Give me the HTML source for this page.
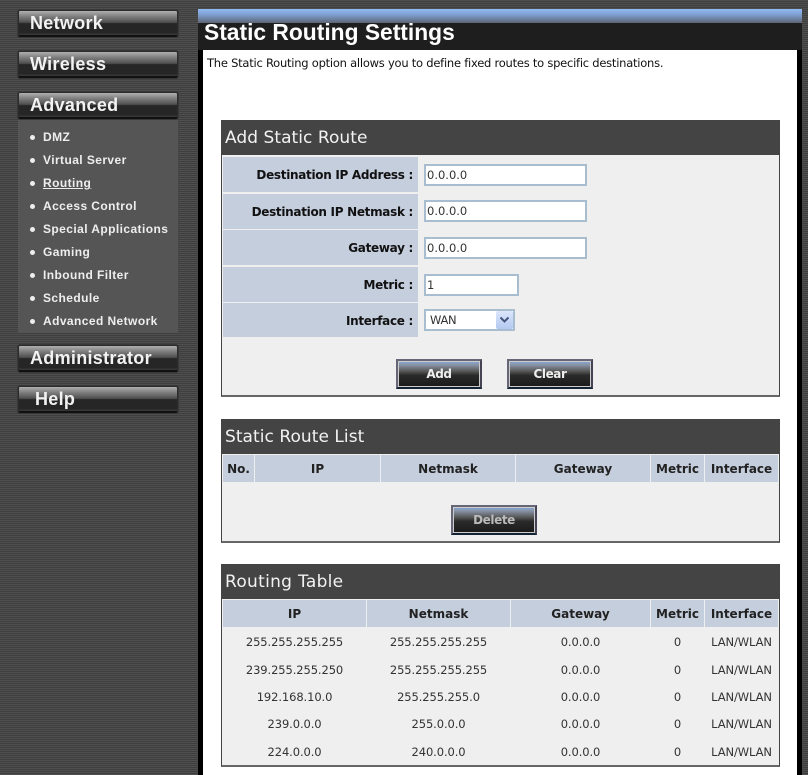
<!DOCTYPE html>
<html><head><meta charset="utf-8"><style>
html,body{margin:0;padding:0;background:#4a4a4a}
#p{position:relative;width:808px;height:775px;overflow:hidden;font-family:"DejaVu Sans","Liberation Sans",sans-serif;
background:repeating-linear-gradient(180deg,#4e4e4e 0,#4e4e4e 1px,#3f3f3f 1px,#3f3f3f 2px)}
#p div,#p span{position:absolute;white-space:nowrap;box-sizing:border-box}
.nb{left:18px;width:160px;height:27px;border:1px solid #2c2c2c;border-radius:2px;border-bottom:2px solid #111;
background:linear-gradient(180deg,#b0b0b0 0,#808080 22%,#4e4e4e 48%,#262626 52%,#262626 90%,#3a3a3a 100%);box-shadow:0 0 0 1px #383838;
color:#f2f2f2;font:bold 18px/25px "Liberation Sans",sans-serif;letter-spacing:.3px;padding:0 0 0 11px}
.sub{color:#eee;font:bold 12px/14px "Liberation Sans",sans-serif;left:43px;letter-spacing:.42px}
.dot{left:30px;width:5px;height:5px;border-radius:50%;background:#eee}
.box{left:221px;width:559px;background:#efefef;border:1px solid #444;border-top:0;border-bottom:2px solid #666}
.hd{left:221px;width:559px;height:35px;background:#444;color:#f2f2f2;font:17px/37px "DejaVu Sans",sans-serif;padding-left:4px;letter-spacing:.05px}
.lab{left:223px;width:195px;background:#c5cedd;text-align:right;padding-right:5px;font:bold 12px/36px "DejaVu Sans",sans-serif;color:#111;letter-spacing:-.3px}
.inp{background:#fff;border:2px solid #a9bdd0;font:11.5px/18px "DejaVu Sans",sans-serif;color:#333;padding-left:1px;letter-spacing:0}
.btn{width:86px;height:30px;border:2px solid;border-color:#667 #445 #123 #667;outline:1px solid #ccc;outline-offset:-3px;
background:linear-gradient(180deg,#7fa8e0 0,#8a96a8 14%,#555 40%,#2a2a2a 55%,#1a1a1a 100%);color:#eee;text-align:center;font:bold 12px/26px "DejaVu Sans",sans-serif;letter-spacing:-.4px}
.th{top:0;background:#c5cedd;text-align:center;font:bold 12px/29px "DejaVu Sans",sans-serif;color:#222;letter-spacing:0}
.td{text-align:center;font:11.5px/16px "DejaVu Sans",sans-serif;color:#333;letter-spacing:-.1px}
</style></head><body><div id="p">

<div style="left:18px;top:119px;width:160px;height:214px;background:#555"></div>
<div class="nb" style="top:10px">Network</div>
<div class="nb" style="top:51px">Wireless</div>
<div class="nb" style="top:92px">Advanced</div>
<div class="dot" style="top:135px"></div><div class="sub" style="top:130px">DMZ</div>
<div class="dot" style="top:158px"></div><div class="sub" style="top:153px">Virtual Server</div>
<div class="dot" style="top:181px"></div><div class="sub" style="top:176px;text-decoration:underline">Routing</div>
<div class="dot" style="top:204px"></div><div class="sub" style="top:199px">Access Control</div>
<div class="dot" style="top:227px"></div><div class="sub" style="top:222px">Special Applications</div>
<div class="dot" style="top:250px"></div><div class="sub" style="top:245px">Gaming</div>
<div class="dot" style="top:273px"></div><div class="sub" style="top:268px">Inbound Filter</div>
<div class="dot" style="top:296px"></div><div class="sub" style="top:291px">Schedule</div>
<div class="dot" style="top:319px"></div><div class="sub" style="top:314px">Advanced Network</div>
<div class="nb" style="top:345px">Administrator</div>
<div class="nb" style="top:386px;padding-left:16px">Help</div>

<div style="left:198px;top:9px;width:604px;height:766px;background:#000"></div>
<div style="left:198px;top:9px;width:604px;height:14px;background:linear-gradient(180deg,#90bcf4 0,#7f9fd0 40%,#5d6675 100%)"></div>
<div style="left:198px;top:23px;width:604px;height:27px;background:#1e1e1e"></div>
<div style="left:204px;top:17px;color:#fff;font:bold 22.8px/30px 'Liberation Sans',sans-serif">Static Routing Settings</div>
<div style="left:203px;top:50px;width:594px;height:725px;background:#fff"></div>
<div style="left:207px;top:55px;font:11.5px/16px 'DejaVu Sans',sans-serif;color:#111;letter-spacing:-.24px">The Static Routing option allows you to define fixed routes to specific destinations.</div>

<div class="box" style="top:120px;height:277px"></div>
<div class="hd" style="top:120px">Add Static Route</div>
<div class="lab" style="top:157px;height:35px">Destination IP Address :</div>
<div class="lab" style="top:194px;height:35px">Destination IP Netmask :</div>
<div class="lab" style="top:230px;height:35px">Gateway :</div>
<div class="lab" style="top:267px;height:35px">Metric :</div>
<div class="lab" style="top:303px;height:34px">Interface :</div>
<div class="inp" style="left:424px;top:164px;width:163px;height:22px">0.0.0.0</div>
<div class="inp" style="left:424px;top:200px;width:163px;height:22px">0.0.0.0</div>
<div class="inp" style="left:424px;top:237px;width:163px;height:22px">0.0.0.0</div>
<div class="inp" style="left:424px;top:274px;width:95px;height:22px">1</div>
<div class="inp" style="left:424px;top:309px;width:91px;height:22px;padding-left:4px;letter-spacing:-.3px">WAN</div>
<div style="left:496px;top:311px;width:17px;height:18px;background:linear-gradient(180deg,#dbe6fb,#b4c8f0);border-radius:2px"></div>
<svg style="position:absolute;left:499px;top:316px" width="11" height="8"><path d="M1.5 1.5L5.5 5.5L9.5 1.5" fill="none" stroke="#41557d" stroke-width="2"/></svg>
<div class="btn" style="left:396px;top:359px">Add</div>
<div class="btn" style="left:507px;top:359px">Clear</div>

<div class="box" style="top:419px;height:124px"></div>
<div class="hd" style="top:419px;line-height:36px">Static Route List</div>
<div style="left:223px;top:455px;width:555px;height:27px">
<div class="th" style="left:0;width:31px;height:27px">No.</div>
<div class="th" style="left:32px;width:125px;height:27px">IP</div>
<div class="th" style="left:158px;width:134px;height:27px">Netmask</div>
<div class="th" style="left:293px;width:134px;height:27px">Gateway</div>
<div class="th" style="left:428px;width:53px;height:27px">Metric</div>
<div class="th" style="left:482px;width:73px;height:27px">Interface</div>
</div>
<div class="btn" style="left:451px;top:505px;color:#bbb">Delete</div>

<div class="box" style="top:564px;height:203px"></div>
<div class="hd" style="top:564px;line-height:36px;letter-spacing:.3px">Routing Table</div>
<div style="left:223px;top:600px;width:555px;height:27px">
<div class="th" style="left:0;width:143px;height:27px">IP</div>
<div class="th" style="left:144px;width:143px;height:27px">Netmask</div>
<div class="th" style="left:288px;width:139px;height:27px">Gateway</div>
<div class="th" style="left:428px;width:53px;height:27px">Metric</div>
<div class="th" style="left:482px;width:73px;height:27px">Interface</div>
</div>

<div class="td" style="left:223px;width:143px;top:634px">255.255.255.255</div><div class="td" style="left:367px;width:143px;top:634px">255.255.255.255</div><div class="td" style="left:511px;width:139px;top:634px">0.0.0.0</div><div class="td" style="left:651px;width:53px;top:634px">0</div><div class="td" style="left:705px;width:73px;top:634px">LAN/WLAN</div>
<div class="td" style="left:223px;width:143px;top:662px">239.255.255.250</div><div class="td" style="left:367px;width:143px;top:662px">255.255.255.255</div><div class="td" style="left:511px;width:139px;top:662px">0.0.0.0</div><div class="td" style="left:651px;width:53px;top:662px">0</div><div class="td" style="left:705px;width:73px;top:662px">LAN/WLAN</div>
<div class="td" style="left:223px;width:143px;top:689px">192.168.10.0</div><div class="td" style="left:367px;width:143px;top:689px">255.255.255.0</div><div class="td" style="left:511px;width:139px;top:689px">0.0.0.0</div><div class="td" style="left:651px;width:53px;top:689px">0</div><div class="td" style="left:705px;width:73px;top:689px">LAN/WLAN</div>
<div class="td" style="left:223px;width:143px;top:716px">239.0.0.0</div><div class="td" style="left:367px;width:143px;top:716px">255.0.0.0</div><div class="td" style="left:511px;width:139px;top:716px">0.0.0.0</div><div class="td" style="left:651px;width:53px;top:716px">0</div><div class="td" style="left:705px;width:73px;top:716px">LAN/WLAN</div>
<div class="td" style="left:223px;width:143px;top:744px">224.0.0.0</div><div class="td" style="left:367px;width:143px;top:744px">240.0.0.0</div><div class="td" style="left:511px;width:139px;top:744px">0.0.0.0</div><div class="td" style="left:651px;width:53px;top:744px">0</div><div class="td" style="left:705px;width:73px;top:744px">LAN/WLAN</div>

</div></body></html>
